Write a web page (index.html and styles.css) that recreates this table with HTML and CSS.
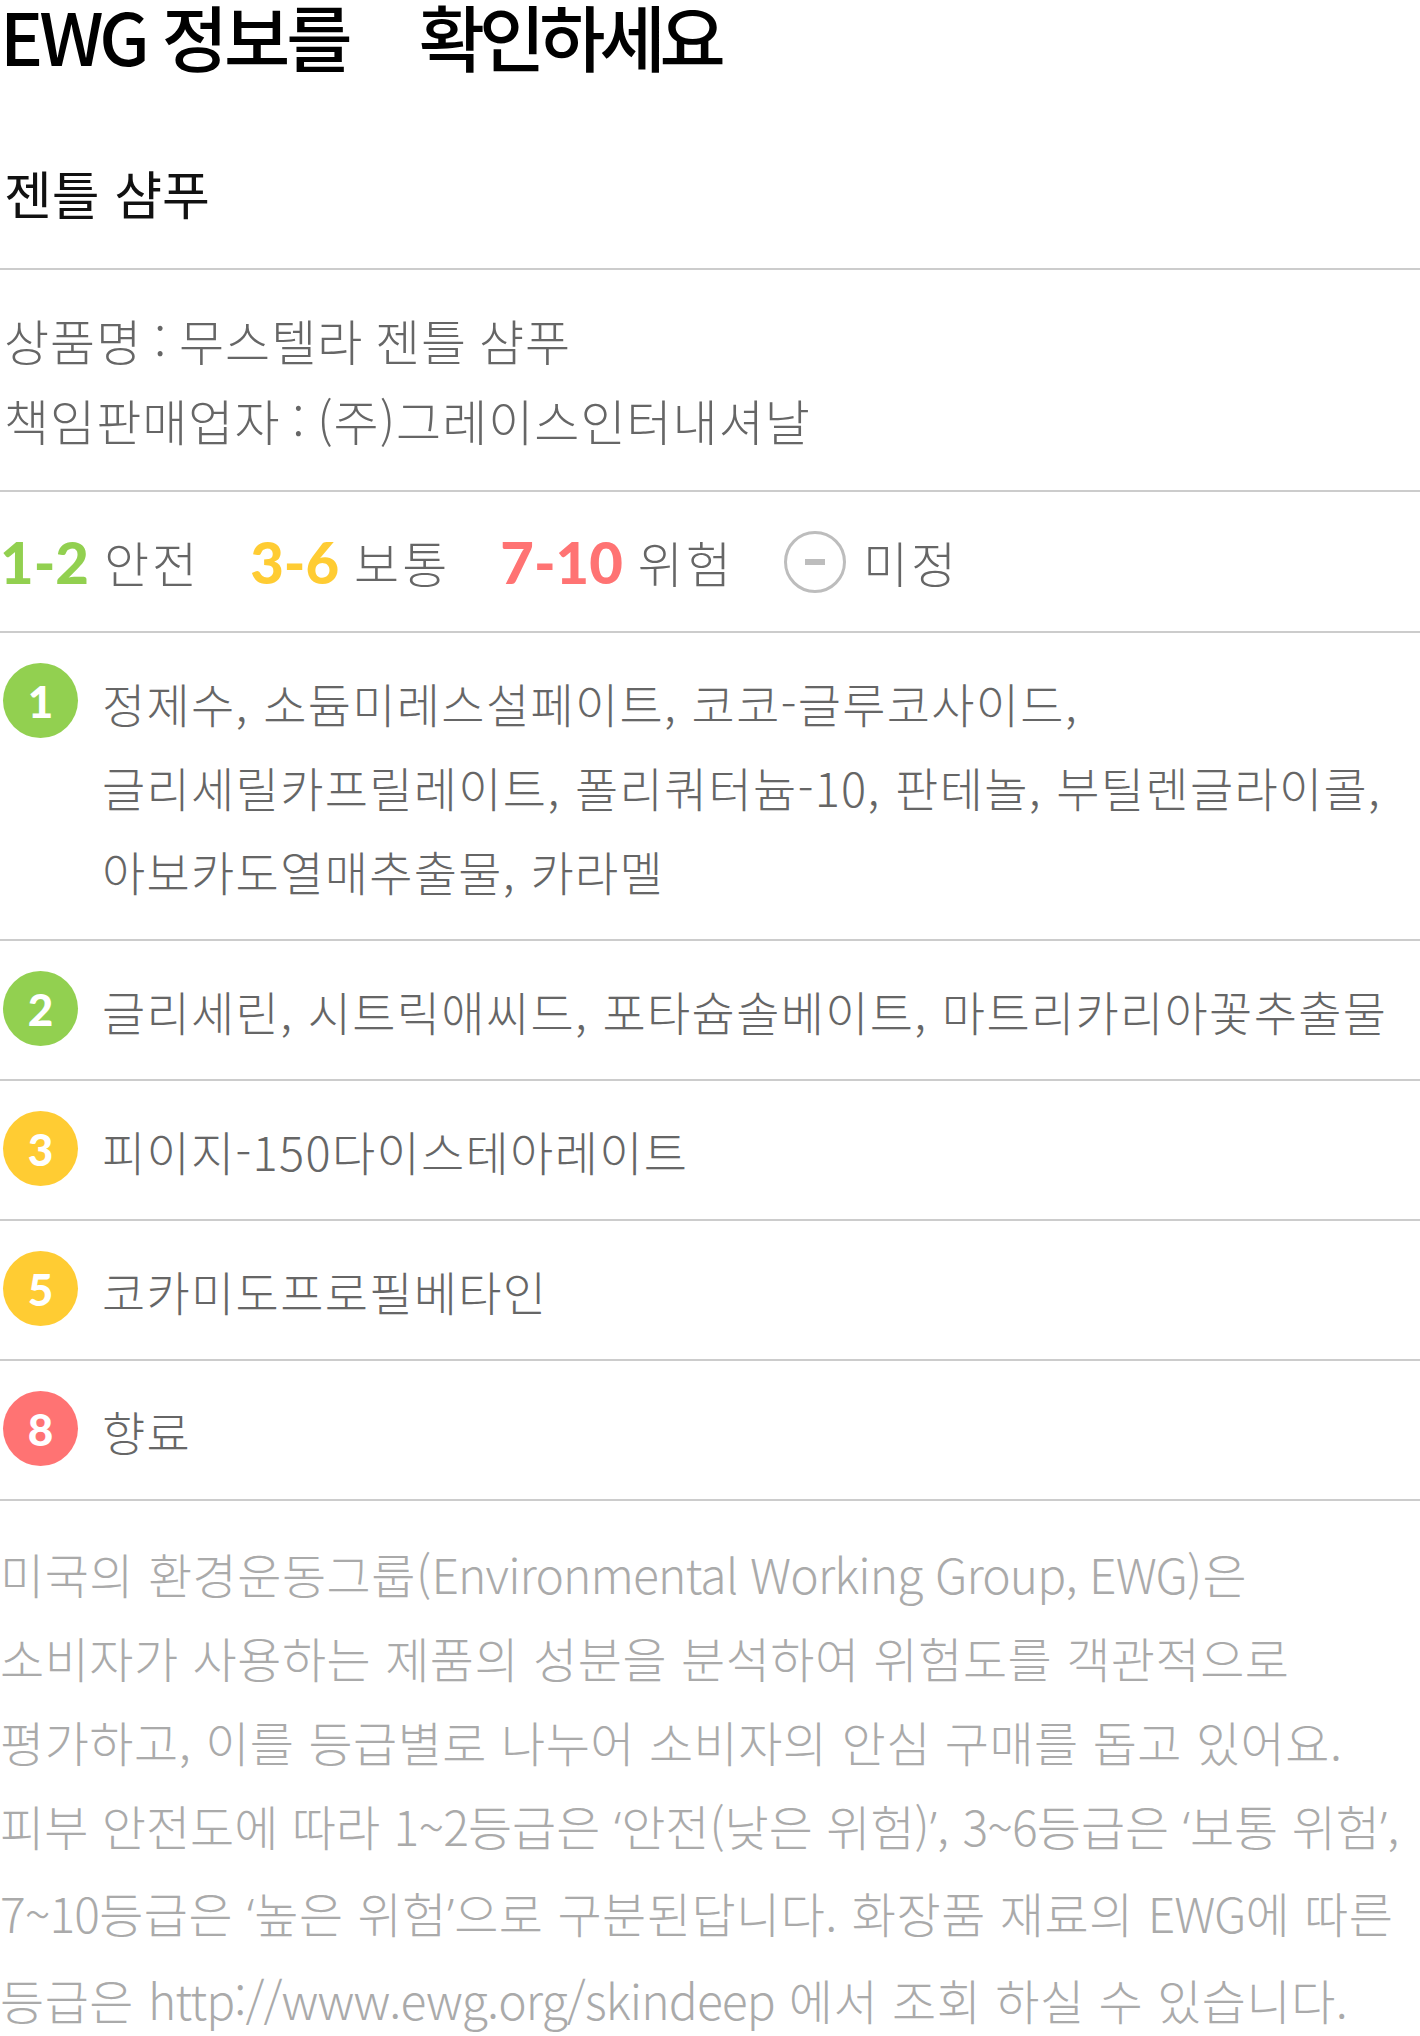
FILE: index.html
```html
<!DOCTYPE html>
<html lang="ko">
<head>
  <meta charset="UTF-8">
  <meta name="viewport" content="width=device-width, initial-scale=1">
  <title>EWG 정보를 확인하세요</title>
  <link rel="stylesheet" href="styles.css">
</head>
<body>

<div class="ewg">
  <h1 class="ewg-title">EWG 정보를 <span class="gap">확인하세요</span></h1>
  <h2 class="product-name">젠틀 샴푸</h2>

  <div class="product-info">
    <p>상품명 : 무스텔라 젠틀 샴푸</p>
    <p>책임판매업자 : (주)그레이스인터내셔날</p>
  </div>

  <div class="legend">
    <span class="legend-item"><b class="safe">1-2</b> 안전</span>
    <span class="legend-item"><b class="normal">3-6</b> 보통</span>
    <span class="legend-item"><b class="danger">7-10</b> 위험</span>
    <span class="legend-item"><i class="unknown"></i> 미정</span>
  </div>

  <ul class="grade-list">
    <li>
      <span class="badge safe-bg">1</span>
      <p>정제수, 소듐미레스설페이트, 코코-글루코사이드,<br>글리세릴카프릴레이트, 폴리쿼터늄-10, 판테놀, 부틸렌글라이콜,<br>아보카도열매추출물, 카라멜</p>
    </li>
    <li>
      <span class="badge safe-bg">2</span>
      <p>글리세린, 시트릭애씨드, 포타슘솔베이트, 마트리카리아꽃추출물</p>
    </li>
    <li>
      <span class="badge normal-bg">3</span>
      <p>피이지-150다이스테아레이트</p>
    </li>
    <li>
      <span class="badge normal-bg">5</span>
      <p>코카미도프로필베타인</p>
    </li>
    <li>
      <span class="badge danger-bg">8</span>
      <p>향료</p>
    </li>
  </ul>

  <p class="ewg-note">
    미국의 환경운동그룹(<span class="en">Environmental Working Group, EWG</span>)은<br>
    소비자가 사용하는 제품의 성분을 분석하여 위험도를 객관적으로<br>
    평가하고, 이를 등급별로 나누어 소비자의 안심 구매를 돕고 있어요.<br>
    <span class="tight">피부 안전도에 따라 <span class="en">1~2</span>등급은 <span class="q">‘</span>안전(낮은 위험)<span class="q">’</span>, <span class="en">3~6</span>등급은 <span class="q">‘</span>보통 위험<span class="q">’</span>,</span><br>
    <span class="en">7~10</span>등급은 <span class="q">‘</span>높은 위험<span class="q">’</span>으로 구분된답니다. 화장품 재료의 <span class="en">EWG</span>에 따른<br>
    등급은 <span class="en">http://www.ewg.org/skindeep</span> 에서 조회 하실 수 있습니다.
  </p>
</div>

</body>
</html>
```

FILE: styles.css
```css
body {
  margin: 0;
  font-family: "Noto Sans CJK KR", "Noto Sans", sans-serif;
  background-color: #fff;
  color: #666;
}
p { margin: 0; }
.ewg {
  width: 1420px;
}
.ewg-title {
  margin: 0;
  font-size: 72px;
  font-weight: 500;
  line-height: 70px;
  letter-spacing: -4px;
  color: #000;
}
.ewg-title .gap {
  margin-left: 54px;
  letter-spacing: -6px;
}
.product-name {
  margin: 0;
  padding: 91px 0 43px 4px;
  font-size: 52px;
  font-weight: 400;
  line-height: 64px;
  color: #111;
  border-bottom: 2px solid #ccc;
}
.product-info {
  padding: 30px 0 30px 4px;
  font-size: 49px;
  font-weight: 300;
  line-height: 80px;
  letter-spacing: 1px;
  word-spacing: -3px;
  border-bottom: 2px solid #ccc;
}
.legend {
  display: flex;
  align-items: center;
  gap: 50px;
  height: 139px;
  font-size: 49px;
  font-weight: 300;
  letter-spacing: 3px;
  border-bottom: 2px solid #ccc;
}
.legend-item {
  display: flex;
  align-items: center;
  gap: 15px;
}
.legend-item b {
  font-family: Lato, sans-serif;
  font-weight: 900;
  font-size: 58px;
  letter-spacing: 0;
}
.safe { color: #92d050; }
.normal { color: #ffcc33; }
.danger { color: #ff7373; }
.unknown {
  display: flex;
  align-items: center;
  justify-content: center;
  box-sizing: border-box;
  width: 62px;
  height: 62px;
  margin-right: 2px;
  border: 3px solid #bdbdbd;
  border-radius: 50%;
}
.unknown::after {
  content: "";
  width: 20px;
  height: 6px;
  background-color: #bdbdbd;
}
.grade-list {
  list-style: none;
  margin: 0;
  padding: 0;
  border-bottom: 2px solid #ccc;
}
.grade-list li {
  display: flex;
  align-items: flex-start;
  gap: 24px;
  padding: 28px 0 26px;
  border-bottom: 2px solid #ccc;
}
.grade-list li:last-child {
  border-bottom: none;
}
.badge {
  flex: none;
  display: flex;
  align-items: center;
  justify-content: center;
  width: 75px;
  height: 75px;
  margin: 2px 0 0 3px;
  border-radius: 50%;
  font-family: Lato, sans-serif;
  font-weight: 900;
  font-size: 44px;
  color: #fff;
}
.safe-bg { background-color: #92d050; }
.normal-bg { background-color: #ffcc33; }
.danger-bg { background-color: #ff7373; }
.grade-list p {
  font-size: 47px;
  font-weight: 300;
  line-height: 84px;
  letter-spacing: 1.3px;
}
.ewg-note {
  padding-top: 30px;
  font-size: 48px;
  font-weight: 300;
  line-height: 84px;
  letter-spacing: 0.5px;
  white-space: nowrap;
  color: #aaa;
}
.ewg-note .tight {
  letter-spacing: 0;
}
.ewg-note .en {
  letter-spacing: -0.9px;
}
.ewg-note .q {
  font-family: "Noto Sans", sans-serif;
  letter-spacing: 0;
}
```
